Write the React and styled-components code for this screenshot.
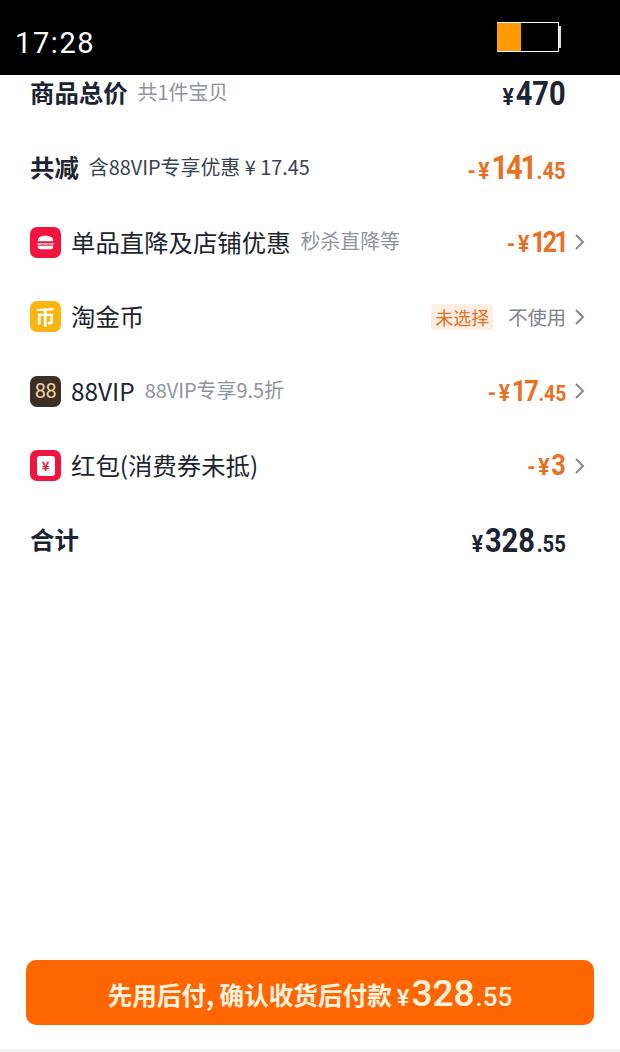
import React from "react";
import styled, { createGlobalStyle } from "styled-components";

const CJK = `"Noto Sans CJK SC", "Noto Sans", sans-serif`;
const NUM = `"Roboto", "Noto Sans CJK SC", sans-serif`;

const GlobalStyle = createGlobalStyle`
  html, body { margin: 0; padding: 0; background: #fff; }
  body { font-family: ${CJK}; }
`;

const Page = styled.div`
  width: 620px;
  height: 1052px;
  display: flex;
  flex-direction: column;
  overflow: hidden;
  background: #fff;
`;

const StatusBar = styled.header`
  height: 75px;
  flex: none;
  background: #000;
  display: flex;
  justify-content: space-between;
  position: relative;
  z-index: 1;
  padding: 22px 61px 0 15px;
  box-sizing: border-box;
`;

const Clock = styled.span`
  font-family: "Roboto", sans-serif;
  font-size: 29px;
  line-height: 42px;
  letter-spacing: 1.6px;
  color: #fff;
`;

const Battery = styled.div`
  width: 62px;
  height: 30px;
  box-sizing: border-box;
  border: 1px solid #fff;
  border-left: none;
  background: linear-gradient(to right, #ff9a00 0 24px, #000 24px);
  position: relative;

  &::after {
    content: "";
    position: absolute;
    right: -3px;
    top: 3px;
    width: 2px;
    height: 22px;
    background: #ddd;
  }
`;

const Scroll = styled.main`
  margin-top: -19px;
  padding: 0 54px 0 30px;
  display: flex;
  flex-direction: column;
`;

const Row = styled.div`
  height: 74.5px;
  display: flex;
  align-items: center;
  flex: none;
`;

const Title = styled.span`
  font-size: 24.4px;
  font-weight: 700;
  color: #1c2333;
  margin-bottom: 3px;
`;

const Label = styled.span`
  font-size: 24.4px;
  color: #20242e;
  margin-left: 10px;
  margin-bottom: 2px;
`;

const Sub = styled.span`
  font-size: 19.9px;
  color: ${(p) => (p.$dark ? "#3b4150" : "#8f939c")};
  margin-left: 10px;
  margin-bottom: 3px;
`;

const Right = styled.div`
  margin-left: auto;
  display: flex;
  align-items: center;
`;

// the amounts are set in a narrowed cut, squeezed from the right edge
const Price = styled.span`
  display: inline-block;
  font-family: ${NUM};
  font-weight: 700;
  color: ${(p) => (p.$orange ? "#e8701f" : "#1c2333")};
  font-size: ${(p) => p.$big}px;
  line-height: 1;
  white-space: nowrap;
  transform: scaleX(0.88);
  transform-origin: right center;
`;

const Digits = styled.span`
  letter-spacing: ${(p) => p.$track || 0}px;
`;

const Cents = styled.span`
  font-size: ${(p) => p.$size}px;
  margin-left: 2px;
`;

const Sign = styled.span`
  font-size: 24px;
  letter-spacing: 3px;
  margin-right: -1px;
`;

const Chevron = styled.svg`
  width: 11px;
  height: 18px;
  flex: none;
  margin-left: 8px;
  margin-right: -19px;
  fill: none;
  stroke: #868a92;
  stroke-width: 2;
`;

const Tag = styled.span`
  background: #fdeee3;
  color: #e8701f;
  font-size: 18px;
  line-height: 26px;
  padding: 0 4px;
  border-radius: 3px;
  margin-right: 15px;
`;

const Unused = styled.span`
  font-size: 19.3px;
  color: #7d818a;
`;

const IconBox = styled.span`
  width: 31px;
  height: 31px;
  flex: none;
  border-radius: 7px;
  background: ${(p) => p.$bg};
  display: flex;
  align-items: center;
  justify-content: center;
`;

const VipDigits = styled.span`
  font-family: "Roboto", sans-serif;
  font-size: 20px;
  color: #eccfa4;
  letter-spacing: -0.5px;
`;

const Ticket = styled.span`
  width: 18px;
  height: 20px;
  border-radius: 3px;
  background: #fff;
  color: #f0143f;
  font-size: 13px;
  font-weight: 700;
  display: flex;
  align-items: center;
  justify-content: center;
`;

const CoinGlyph = styled.span`
  color: #fff;
  font-size: 20px;
  font-weight: 700;
`;

const Footer = styled.footer`
  margin-top: auto;
  padding: 0 26px 24px;
  border-bottom: 3px solid #f2f2f3;
`;

const PayButton = styled.button`
  width: 100%;
  height: 65px;
  border: none;
  border-radius: 10px;
  background: #ff6600;
  color: #fff3e0;
  font-family: ${CJK};
  font-weight: 700;
  font-size: 24.6px;
  display: flex;
  align-items: center;
  justify-content: center;
  padding: 2px 0 0;
`;

const PayAmount = styled.span`
  font-family: "Roboto", sans-serif;
  font-weight: 500;
  margin-left: 5px;
  font-size: 37px;
  white-space: nowrap;
`;

const PayYen = styled.span`
  font-size: 24px;
  margin-right: 2px;
`;

const PayCents = styled.span`
  font-size: 26px;
  margin-left: 1px;
`;

const Arrow = () => (
  <Chevron viewBox="0 0 11 18">
    <path d="M2 2l7 7-7 7" />
  </Chevron>
);

const BurgerIcon = () => (
  <svg width="19" height="17" viewBox="0 0 21 17">
    <path d="M2 7C2 3 5 1 10.500 1S19 3 19 7z" fill="#fff" />
    <path d="M1 9h19v1.500l-3 1-3-1-3.500 1-3.500-1-3 1-3-1z" fill="#fff" opacity="0.7" />
    <path d="M2 12h17v1a3 3 0 0 1-3 3H5a3 3 0 0 1-3-3z" fill="#fff" />
  </svg>
);

export default function App() {
  return (
    <Page>
      <GlobalStyle />
      <StatusBar>
        <Clock>17:28</Clock>
        <Battery />
      </StatusBar>
      <Scroll>
        <Row>
          <Title>商品总价</Title>
          <Sub>共1件宝贝</Sub>
          <Right>
            <Price $big={33}><Sign>¥</Sign><Digits>470</Digits></Price>
          </Right>
        </Row>
        <Row>
          <Title>共减</Title>
          <Sub $dark>含88VIP专享优惠 ¥ 17.45</Sub>
          <Right>
            <Price $orange $big={33}><Sign>-¥</Sign><Digits $track={-2.5}>141</Digits><Cents $size={23}>.45</Cents></Price>
          </Right>
        </Row>
        <Row>
          <IconBox $bg="#f0143f"><BurgerIcon /></IconBox>
          <Label>单品直降及店铺优惠</Label>
          <Sub>秒杀直降等</Sub>
          <Right>
            <Price $orange $big={29}><Sign>-¥</Sign><Digits $track={-3.5}>121</Digits></Price>
            <Arrow />
          </Right>
        </Row>
        <Row>
          <IconBox $bg="#fbb40f"><CoinGlyph>币</CoinGlyph></IconBox>
          <Label>淘金币</Label>
          <Right>
            <Tag>未选择</Tag>
            <Unused>不使用</Unused>
            <Arrow />
          </Right>
        </Row>
        <Row>
          <IconBox $bg="#3d3022"><VipDigits>88</VipDigits></IconBox>
          <Label>88VIP</Label>
          <Sub>88VIP专享9.5折</Sub>
          <Right>
            <Price $orange $big={29}><Sign>-¥</Sign><Digits $track={-2.5}>17</Digits><Cents $size={22}>.45</Cents></Price>
            <Arrow />
          </Right>
        </Row>
        <Row>
          <IconBox $bg="#f0143f"><Ticket>¥</Ticket></IconBox>
          <Label>红包(消费券未抵)</Label>
          <Right>
            <Price $orange $big={29}><Sign>-¥</Sign><Digits>3</Digits></Price>
            <Arrow />
          </Right>
        </Row>
        <Row>
          <Title>合计</Title>
          <Right>
            <Price $big={33}><Sign>¥</Sign><Digits>328</Digits><Cents $size={23}>.55</Cents></Price>
          </Right>
        </Row>
      </Scroll>
      <Footer>
        <PayButton>
          先用后付, 确认收货后付款
          <PayAmount><PayYen>¥</PayYen>328<PayCents>.55</PayCents></PayAmount>
        </PayButton>
      </Footer>
    </Page>
  );
}
